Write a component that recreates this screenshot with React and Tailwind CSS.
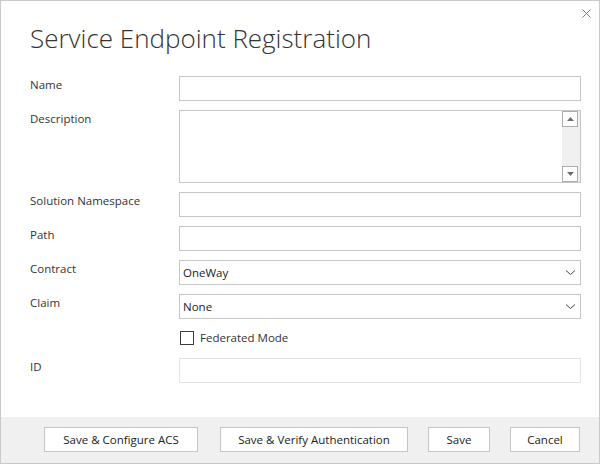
import React from "react";

const font = { fontFamily: '"Open Sans", "Noto Sans", sans-serif' };

function Chevron() {
  return (
    <svg width="11" height="7" viewBox="0 0 11 7" className="shrink-0">
      <path d="M1 1.5 L5.5 5.5 L10 1.5" fill="none" stroke="#444" strokeWidth="1" />
    </svg>
  );
}

function Row({ label, children, className = "" }) {
  return (
    <div className={`flex ${className}`}>
      <div className="w-[149px] shrink-0 pt-[1px] text-[11.5px] leading-[16px] text-[#333]">{label}</div>
      <div className="flex-1">{children}</div>
    </div>
  );
}

function TextBox({ light }) {
  return (
    <div
      className={`h-[25px] border bg-white ${light ? "border-[#e3e3e3]" : "border-[#c6c6c6]"}`}
    />
  );
}

function Select({ value }) {
  return (
    <div className="flex h-[25px] items-center justify-between border border-[#c6c6c6] bg-white pl-[3px] pr-[4px] text-[11.5px] text-[#222]">
      <span>{value}</span>
      <Chevron />
    </div>
  );
}

function ScrollArrow({ up }) {
  return (
    <div className="flex h-[16px] w-[16px] items-center justify-center border border-[#adadad] bg-white">
      <svg width="7" height="4" viewBox="0 0 7 4">
        <path d={up ? "M0 4 L3.5 0 L7 4 Z" : "M0 0 L3.5 4 L7 0 Z"} fill="#6d6d6d" />
      </svg>
    </div>
  );
}

function Button({ children, className = "" }) {
  return (
    <button
      className={`h-[25px] border border-[#c6c6c6] bg-white text-[11.5px] text-[#222] ${className}`}
    >
      {children}
    </button>
  );
}

export default function App() {
  return (
    <div
      className="flex h-[464px] w-[600px] flex-col border border-[#c9c9c9] bg-white"
      style={font}
    >
      <div className="relative flex-1 pl-[29px] pr-[18px]">
        <button className="absolute right-[8px] top-[8px] text-[#777]">
          <svg width="9" height="9" viewBox="0 0 9 9">
            <path d="M0.5 0.5 L8.5 8.5 M8.5 0.5 L0.5 8.5" stroke="#7a7a7a" strokeWidth="1" />
          </svg>
        </button>

        <h1 className="mt-[19px] text-[26px] font-light leading-[36px] text-[#333]">
          Service Endpoint Registration
        </h1>

        <Row label="Name" className="mt-[20px]">
          <TextBox />
        </Row>

        <Row label="Description" className="mt-[9px]">
          <div className="flex h-[73px] border border-[#c6c6c6] bg-white">
            <div className="flex-1" />
            <div className="flex w-[18px] flex-col justify-between bg-[#f0f0f0]">
              <ScrollArrow up />
              <ScrollArrow />
            </div>
          </div>
        </Row>

        <Row label="Solution Namespace" className="mt-[9px]">
          <TextBox />
        </Row>

        <Row label="Path" className="mt-[9px]">
          <TextBox />
        </Row>

        <Row label="Contract" className="mt-[9px]">
          <Select value="OneWay" />
        </Row>

        <Row label="Claim" className="mt-[9px]">
          <Select value="None" />
        </Row>

        <div className="mt-[11px] flex items-center pl-[150px]">
          <div className="h-[14px] w-[14px] border border-[#3c3c3c] bg-white" />
          <span className="ml-[6px] text-[11.5px] leading-[16px] text-[#333]">Federated Mode</span>
        </div>

        <Row label="ID" className="mt-[12px]">
          <TextBox light />
        </Row>
      </div>

      <div className="flex h-[46px] items-start justify-end gap-[20px] bg-[#f0f0f0] pr-[19px] pt-[10px]">
        <Button className="mr-[2px] w-[154px]">Save &amp; Configure ACS</Button>
        <Button className="w-[188px]">Save &amp; Verify Authentication</Button>
        <Button className="w-[62px]">Save</Button>
        <Button className="w-[70px]">Cancel</Button>
      </div>
    </div>
  );
}
